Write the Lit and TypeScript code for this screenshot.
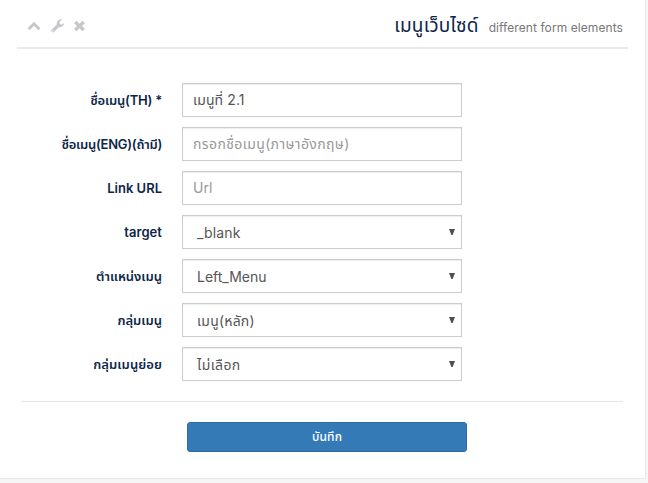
import { LitElement, html, css } from "lit";
import { customElement, property } from "lit/decorators.js";

const fontStack = css`Inter, "Noto Sans Thai", "Noto Sans", "Liberation Sans", sans-serif`;

@customElement("form-row")
class FormRow extends LitElement {
  @property() label = "";
  @property() value = "";
  @property() kind = "text";
  @property({ type: Number }) labelSpacing = 0;
  @property({ type: Number }) valueSpacing = 0;

  static styles = css`
    :host { display: grid; grid-template-columns: 162px 280px; column-gap: 20px; height: 34px; align-items: center; }
    .label { text-align: right; font: 600 13px/20px ${fontStack}; color: #0d2648; white-space: nowrap; }
    .control { box-sizing: border-box; height: 34px; border: 1px solid #ccc; background: #fff; padding: 0 6px 0 10px;
      display: flex; align-items: center; justify-content: space-between;
      box-shadow: inset 0 1px 1px rgba(0,0,0,.075); font: 400 14px/20px ${fontStack}; color: #555; white-space: nowrap; }
    .select { padding: 2px 6px 0 14px; }
    .placeholder { color: #999; }
    .arrow { width: 6px; height: 6px; fill: #505050; margin-top: -3px; }
  `;

  render() {
    return html`
      <div class="label" style="letter-spacing:${this.labelSpacing}px">${this.label}</div>
      <div class="control ${this.kind}">
        <span style="letter-spacing:${this.valueSpacing}px">${this.value}</span>
        ${this.kind === "select" ? html`<svg class="arrow" viewBox="0 0 6 6"><path d="M0 0H6L3.6 6H2.4Z" /></svg>` : ""}
      </div>`;
  }
}

const rows: [string, string, string, number, number][] = [
  ["ชื่อเมนู(TH) *", "เมนูที่ 2.1", "text", -0.22, 0.1],
  ["ชื่อเมนู(ENG)(ถ้ามี)", "กรอกชื่อเมนู(ภาษาอังกฤษ)", "placeholder", -0.26, 0.38],
  ["Link URL", "Url", "placeholder", 0, 0],
  ["target", "_blank", "select", 0.05, 0.15],
  ["ตำแหน่งเมนู", "Left_Menu", "select", 0, 0],
  ["กลุ่มเมนู", "เมนู(หลัก)", "select", 0, 0.2],
  ["กลุ่มเมนูย่อย", "ไม่เลือก", "select", 0.08, 0.4],
];

@customElement("app-root")
class AppRoot extends LitElement {
  static styles = css`
    :host { display: block; width: 648px; height: 483px; background: #f6f6f7; overflow: hidden; font-family: ${fontStack}; }
    .panel { box-sizing: border-box; width: 646px; height: 479px; background: #fff; border: solid #e6e9ed; border-width: 0 1px 1px 0; }
    .header { box-sizing: border-box; margin: 0 17px; height: 49px; border-bottom: 2px solid #e6e9ed; display: flex;
      align-items: center; justify-content: space-between; padding: 4px 5px 0 9px; }
    .tools { display: flex; gap: 7px; }
    .tools svg { width: 16px; height: 16px; fill: #c5c7cb; }
    .title { display: flex; align-items: baseline; gap: 10px; white-space: nowrap; }
    h2 { margin: 0; font-size: 19px; line-height: 22px; font-weight: 400; color: #0d2648; letter-spacing: .15px; }
    small { font-size: 12px; color: #777; letter-spacing: .08px; }
    form { padding-top: 34px; display: flex; flex-direction: column; gap: 10px; }
    hr { box-sizing: border-box; height: 1px; border: 0; background: #e5e5e5; margin: 10px 22px 10px; width: 601px; }
    button { box-sizing: border-box; width: 280px; height: 30px; margin-left: 187px; border: 1px solid #2e6da4; border-radius: 3px;
      background: #337ab7; color: #fff; font: 500 12px/18px ${fontStack}; letter-spacing: .15px; padding: 0; }
  `;

  render() {
    return html`
      <section class="panel">
        <header class="header">
          <div class="tools">
            <svg viewBox="0 0 16 16"><path d="M8 3.8 14.4 10.2 12.5 12.2 8 7.8 3.5 12.2 1.6 10.2Z" /></svg>
            <svg viewBox="-.8 0 16 16"><path d="M9.2 9.1 4.2 14.1Q3.1 15 2 14.1L1.7 13.8Q.9 12.8 1.8 11.7L7 6.6A4.2 4.2 0 0 1 12.6 1.7L9.8 3.5V5.7L11.7 6.7 14.3 5A4.2 4.2 0 0 1 9.2 9.1ZM3.1 12.2A.7.7 0 1 0 3.1 13.6.7.7 0 0 0 3.1 12.2Z" fill-rule="evenodd" /></svg>
            <svg viewBox="0 0 16 16"><path d="M4.5 2.8 7.5 5.8 10.5 2.8 12.9 5.2 10 8 12.9 10.8 10.5 13.2 7.5 10.2 4.5 13.2 2.1 10.8 5 8 2.1 5.2Z" /></svg>
          </div>
          <div class="title"><h2>เมนูเว็บไซด์</h2><small>different form elements</small></div>
        </header>
        <form>
          ${rows.map(([label, value, kind, labelSpacing, valueSpacing]) => html`<form-row .label=${label} .value=${value} .kind=${kind} .labelSpacing=${labelSpacing} .valueSpacing=${valueSpacing}></form-row>`)}
          <hr />
          <button type="button">บันทึก</button>
        </form>
      </section>`;
  }
}
